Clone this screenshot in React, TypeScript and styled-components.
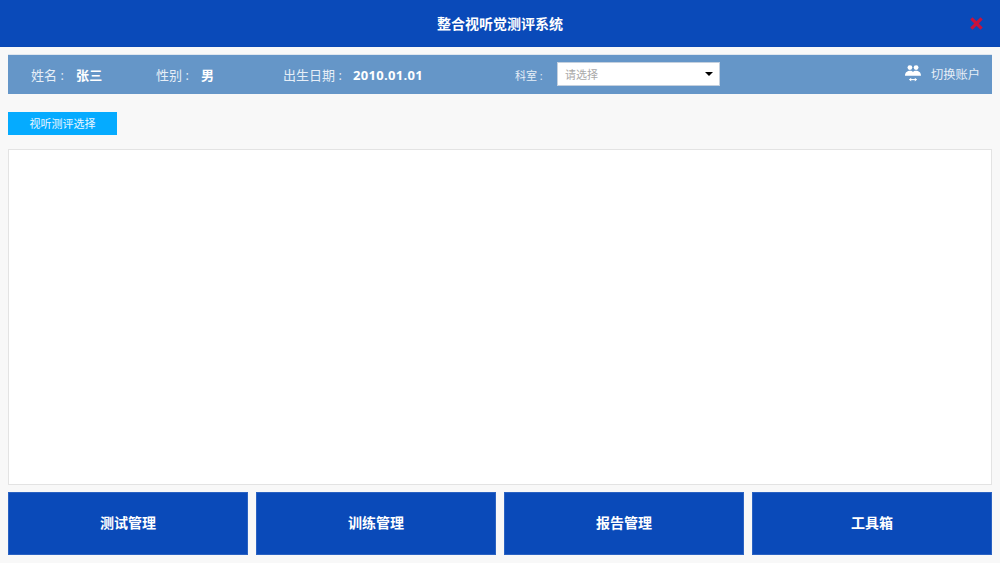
import React from 'react'
import styled, { createGlobalStyle } from 'styled-components'

const GlobalStyle = createGlobalStyle`
  html, body {
    margin: 0;
    padding: 0;
    background: #f8f8f8;
  }
  * {
    box-sizing: border-box;
  }
`

const menus = ['测试管理', '训练管理', '报告管理', '工具箱']

function App() {
  return (
    <>
      <GlobalStyle />
      <Page>
        <Header>
          <Title>整合视听觉测评系统</Title>
          <CloseIcon viewBox="0 0 14 14">
            <path d="M2.2 2.2 L11.8 11.8 M11.8 2.2 L2.2 11.8" stroke="#c8123c" strokeWidth="3" />
          </CloseIcon>
        </Header>

        <InfoBar>
          <Field $width={125} $label={45}>
            <Label>姓名 :</Label>
            <Value>张三</Value>
          </Field>
          <Field $width={127} $label={45}>
            <Label>性别 :</Label>
            <Value>男</Value>
          </Field>
          <Field $width={232} $label={70}>
            <Label>出生日期 :</Label>
            <Value>2010.01.01</Value>
          </Field>
          <DeptLabel>科室 :</DeptLabel>
          <Select>
            <Placeholder>请选择</Placeholder>
            <Caret />
          </Select>
          <Switch>
            <UsersIcon viewBox="0 0 16 17">
              <circle cx="4.9" cy="2.6" r="2.4" fill="#fff" />
              <circle cx="11.1" cy="2.6" r="2.4" fill="#fff" />
              <path d="M0 10.8 C0 7.2 2.5 5.8 5 5.8 C6.5 5.8 7.4 6.2 8 7 C8.6 6.2 9.5 5.8 11 5.8 C13.5 5.8 16 7.2 16 10.8 Z" fill="#fff" />
              <path d="M4.6 14.6 H11.4" stroke="#fff" strokeWidth="1.1" fill="none" />
              <path d="M6.2 12.8 L4 14.6 L6.2 16.4 Z M9.8 12.8 L12 14.6 L9.8 16.4 Z" fill="#fff" />
            </UsersIcon>
            切换账户
          </Switch>
        </InfoBar>

        <TabRow>
          <Tab>视听测评选择</Tab>
        </TabRow>

        <Panel />

        <MenuRow>
          {menus.map((m) => (
            <MenuButton key={m}>{m}</MenuButton>
          ))}
        </MenuRow>
      </Page>
    </>
  )
}

export default App

const Page = styled.div`
  width: 1000px;
  height: 563px;
  display: flex;
  flex-direction: column;
  overflow: hidden;
  background: #f8f8f8;
  font-family: 'Open Sans', 'Noto Sans CJK SC', sans-serif;
`

const Header = styled.div`
  position: relative;
  flex: none;
  height: 47px;
  display: flex;
  align-items: center;
  justify-content: center;
  background: #0a4ab9;
  border-bottom: 1px solid #0a48b4;
`

const Title = styled.div`
  color: #ffffff;
  font-size: 14px;
  font-weight: 700;
`

const CloseIcon = styled.svg`
  position: absolute;
  top: 16px;
  right: 16px;
  width: 15px;
  height: 15px;
`

const InfoBar = styled.div`
  flex: none;
  height: 40px;
  margin: 7px 8px 0;
  padding: 0 12px 0 23px;
  display: flex;
  align-items: center;
  background: #6596c8;
  border-top: 1px solid #dfe6ee;
  color: #ffffff;
`

const Label = styled.span`
  flex: none;
  white-space: nowrap;
  color: #e6eef7;
`

const Field = styled.div<{ $width: number; $label: number }>`
  width: ${(p) => p.$width}px;
  display: flex;
  align-items: center;
  font-size: 13px;

  ${Label} {
    width: ${(p) => p.$label}px;
  }
`

const Value = styled.span`
  font-weight: 700;
  letter-spacing: 0.3px;
  color: #ffffff;
`

const DeptLabel = styled.span`
  width: 42px;
  flex: none;
  font-size: 11px;
  white-space: nowrap;
  color: #e6eef7;
`

const Select = styled.div`
  width: 163px;
  height: 24px;
  margin-bottom: 2px;
  padding: 0 6px 0 7px;
  display: flex;
  align-items: center;
  justify-content: space-between;
  background: #ffffff;
  border: 1px solid #c4d0de;
`

const Placeholder = styled.span`
  font-size: 11px;
  color: #a9a9a9;
`

const Caret = styled.span`
  width: 0;
  height: 0;
  border-left: 4px solid transparent;
  border-right: 4px solid transparent;
  border-top: 4px solid #000000;
`

const Switch = styled.div`
  margin-left: auto;
  margin-bottom: 2px;
  display: flex;
  align-items: center;
  gap: 10px;
  font-size: 12.25px;
  color: #e6eef7;
`

const UsersIcon = styled.svg`
  width: 16px;
  height: 17px;
`

const TabRow = styled.div`
  flex: none;
  margin: 18px 8px 0;
`

const Tab = styled.div`
  width: 109px;
  height: 23px;
  padding-bottom: 2px;
  display: flex;
  align-items: center;
  justify-content: center;
  background: #05abff;
  color: #e8f6ff;
  font-size: 11px;
`

const Panel = styled.div`
  flex: none;
  height: 336px;
  margin: 14px 8px 0;
  background: #ffffff;
  border: 1px solid #e3e3e3;
`

const MenuRow = styled.div`
  flex: none;
  margin: 7px 8px 0;
  display: grid;
  grid-template-columns: repeat(4, 1fr);
  gap: 8px;
`

const MenuButton = styled.div`
  height: 63px;
  padding-bottom: 3px;
  display: flex;
  align-items: center;
  justify-content: center;
  background: #0a4ab9;
  border: 1px solid #2a62c2;
  color: #ffffff;
  font-size: 14px;
  font-weight: 700;
`
